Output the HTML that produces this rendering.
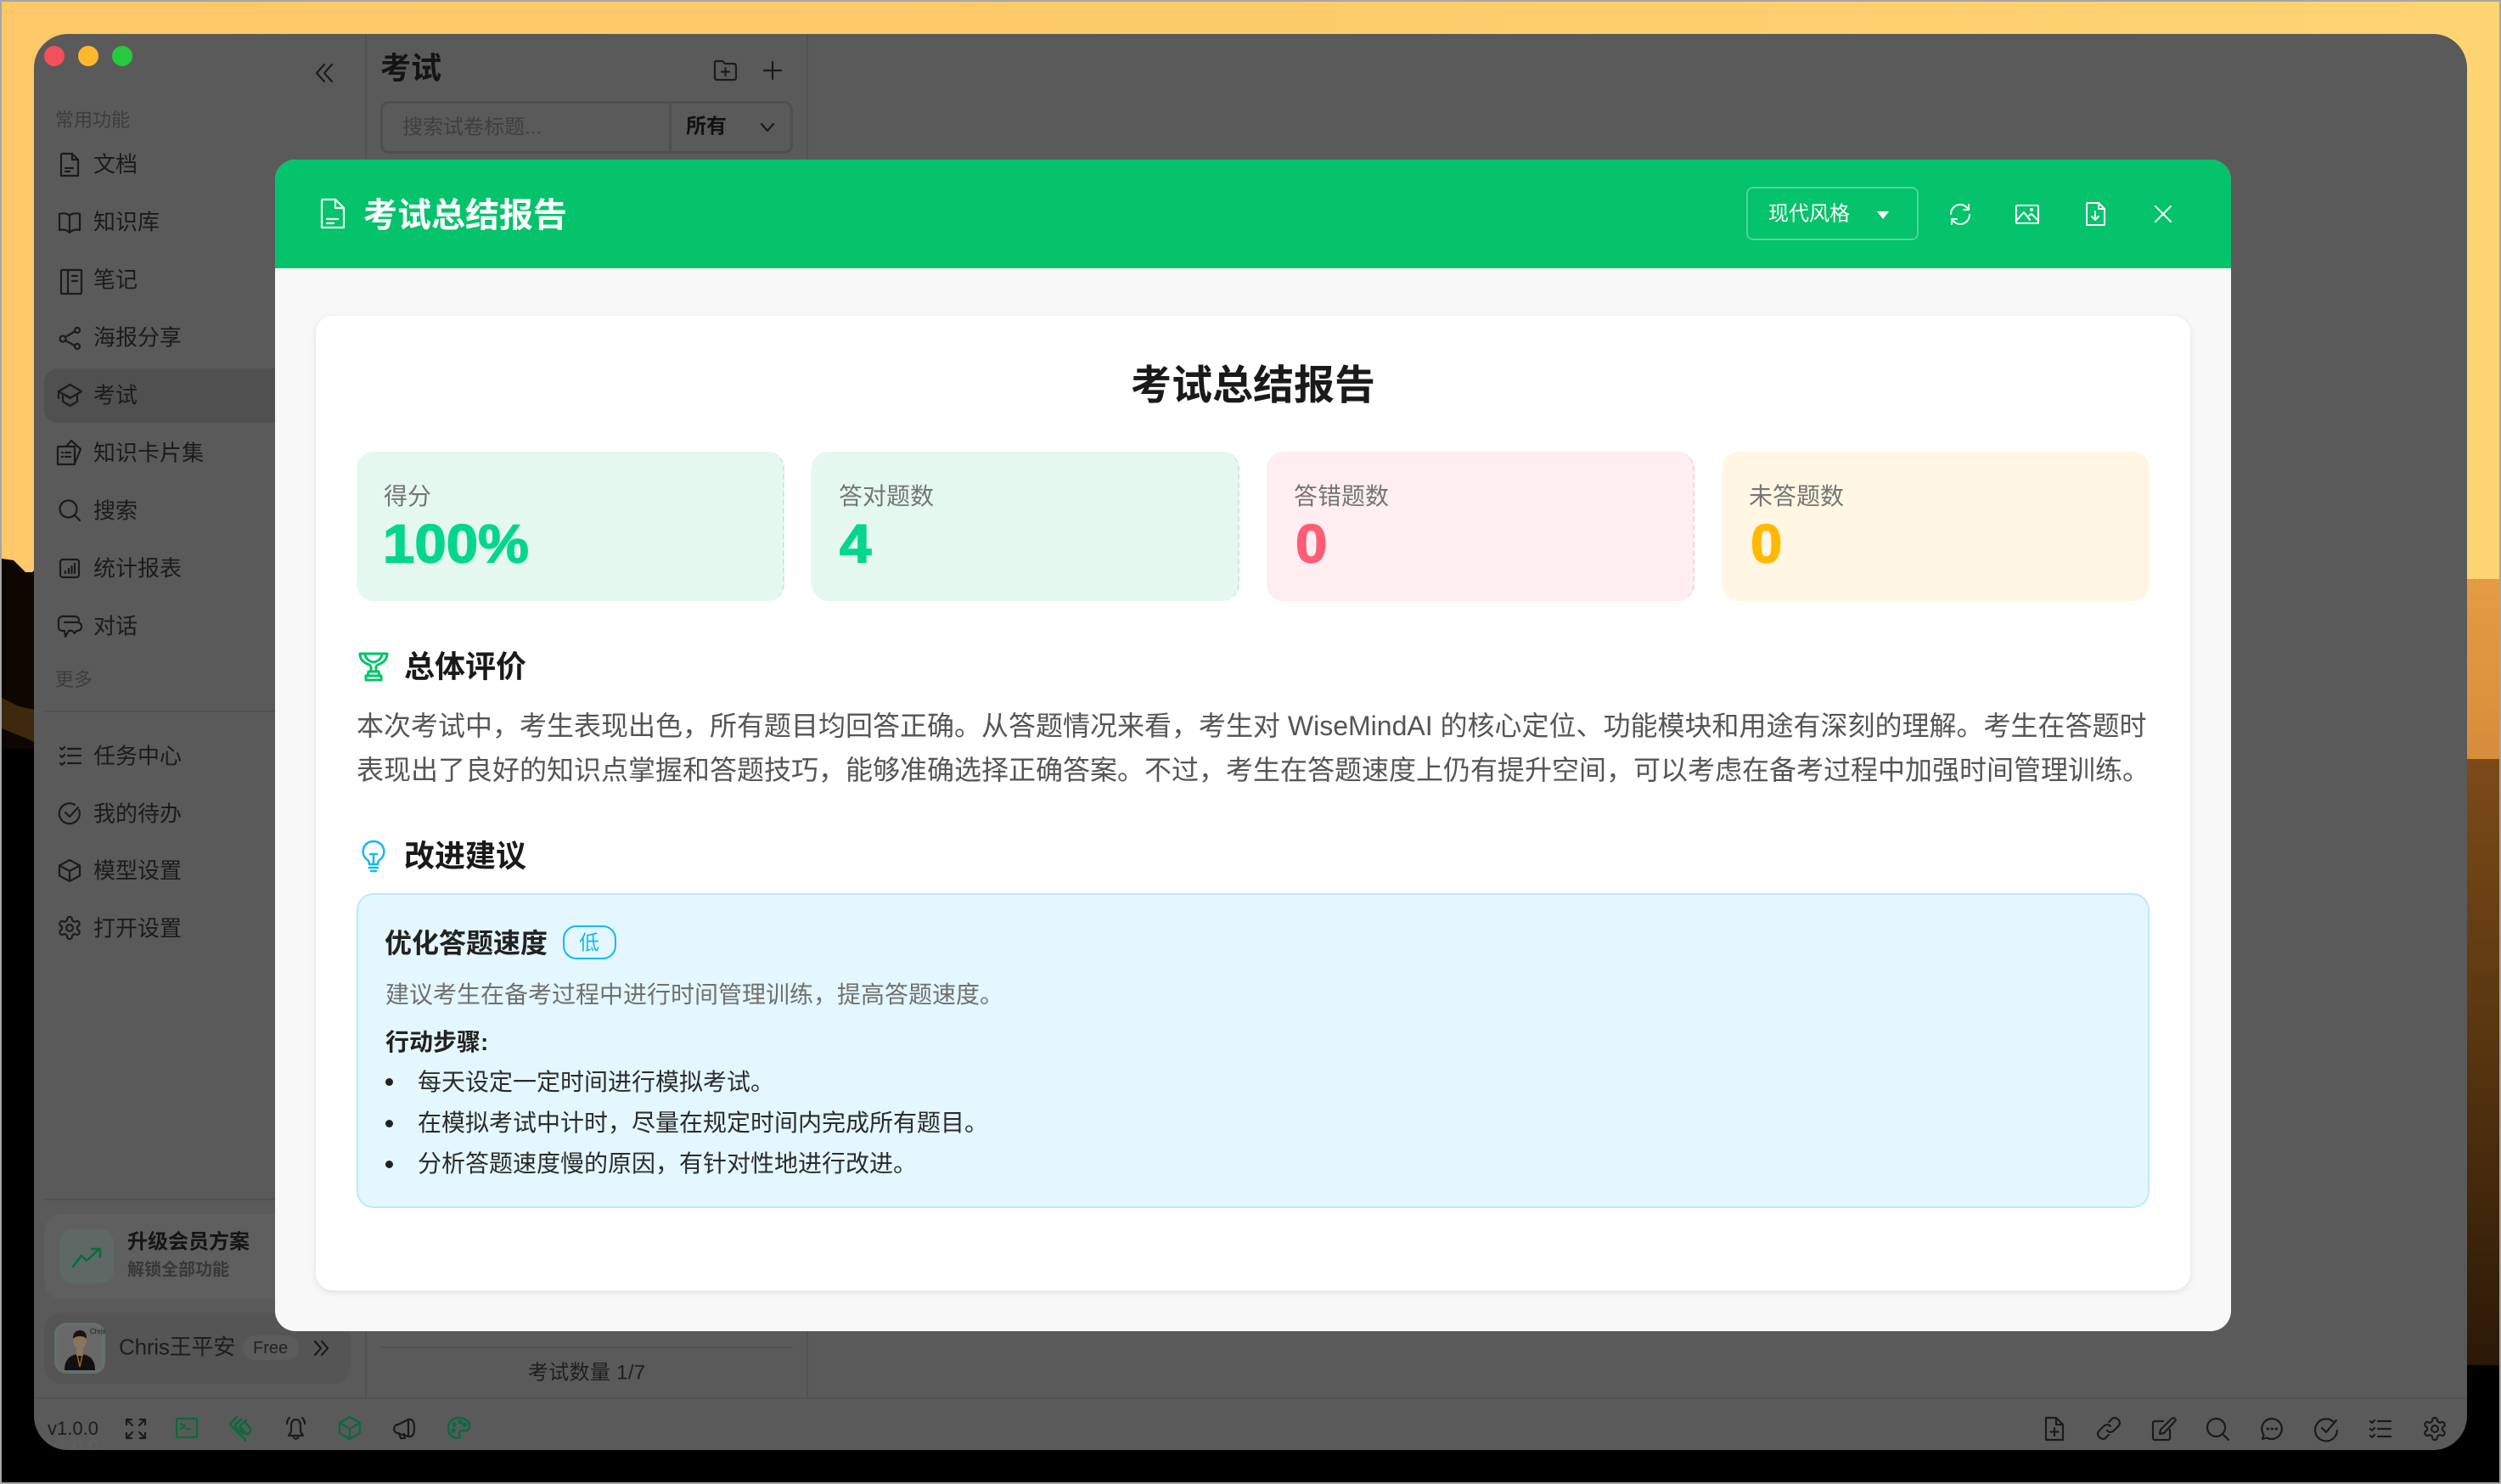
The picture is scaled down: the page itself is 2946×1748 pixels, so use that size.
<!DOCTYPE html>
<html lang="zh-CN">
<head>
<meta charset="utf-8">
<title>考试总结报告</title>
<style>
html,body{margin:0;padding:0;background:#000;}
body{position:relative;width:2946px;height:1748px;overflow:hidden;font-family:"Liberation Sans","Noto Sans CJK SC",sans-serif;}
#frame{position:absolute;left:0;top:0;width:2946px;height:1748px;background:#a6a6a6;}
#wall{position:absolute;left:2px;top:2px;}
#win{position:absolute;left:40px;top:40px;width:2866px;height:1668px;background:#5a5a5a;border-radius:40px;overflow:hidden;}
.a{position:absolute;}
.t{position:absolute;white-space:nowrap;line-height:1.2;transform:translateY(calc(-50% + 2px));}
svg.i{position:absolute;fill:none;stroke:#1b1b1b;stroke-width:2.200;stroke-linecap:round;stroke-linejoin:round;overflow:visible;}
.n{font-size:26px;color:#1b1b1b;left:110px;margin-top:-1px;}
.w{stroke:#fff!important;}
.g{stroke:#0a6a3e!important;}
.sec{font-size:36px;font-weight:700;color:#1a1a1a;}
.stat{position:absolute;top:532px;width:504px;height:176px;border-radius:20px;box-sizing:border-box;}
.lbl{font-size:28px;color:#757575;}
.val{font-size:64px;font-weight:700;font-family:"Liberation Sans",sans-serif;transform:translateY(-50%) scaleX(1.05);transform-origin:left center;-webkit-text-stroke:1.500px currentColor;}
.li{font-size:28px;color:#2b2b2b;left:492px;}
.dot{position:absolute;left:454px;width:9px;height:9px;border-radius:50%;background:#222;}
</style>
</head>
<body>
<div id="frame"></div>
<svg id="wall" width="2942" height="1744" viewBox="0 0 2942 1744">
  <defs>
    <linearGradient id="sky" x1="0" y1="0" x2="1" y2="0"><stop offset="0" stop-color="#ffc868"/><stop offset=".5" stop-color="#fdcb6a"/><stop offset="1" stop-color="#ffd472"/></linearGradient>
    <linearGradient id="br" x1="0" y1="0" x2="0" y2="1"><stop offset="0" stop-color="#7c4b18"/><stop offset=".5" stop-color="#55340f"/><stop offset="1" stop-color="#2a1806"/></linearGradient>
    <linearGradient id="or" x1="0" y1="0" x2="0" y2="1"><stop offset="0" stop-color="#e39c42"/><stop offset="1" stop-color="#d68d3c"/></linearGradient>
  </defs>
  <rect width="2942" height="1744" fill="url(#sky)"/>
  <rect x="2860" y="680" width="82" height="215" fill="url(#or)"/>
  <rect x="2860" y="892" width="82" height="718" fill="url(#br)"/>
  <rect x="2860" y="1606" width="82" height="138" fill="#000"/>
  <path d="M0 656l14 2 8 8 6 6 8 0 4-4 12 2 8-2V1744H0z" fill="#0e0600"/>
  <path d="M0 820l20 10 38 8v44L30 868 0 856z" fill="#3d2a0e"/>
  <rect y="880" width="70" height="864" fill="#000"/>
  <rect y="1700" width="2942" height="44" fill="#000"/>
</svg>

<div id="win"><div class="t" style="left:16px;top:1662px;font-size:22px;color:#5f5f5f">v1.0.0</div></div>

<!-- panel dividers -->
<div class="a" style="left:430px;top:40px;width:2px;height:1607px;background:#525252"></div>
<div class="a" style="left:950px;top:40px;width:2px;height:1607px;background:#525252"></div>
<div class="a" style="left:40px;top:1646px;width:2866px;height:2px;background:#535353"></div>

<!-- traffic lights -->
<div class="a" style="left:52px;top:54px;width:24px;height:24px;border-radius:50%;background:#f2505a"></div>
<div class="a" style="left:92px;top:54px;width:24px;height:24px;border-radius:50%;background:#ffb82e"></div>
<div class="a" style="left:132px;top:54px;width:24px;height:24px;border-radius:50%;background:#27c93f"></div>

<!-- collapse -->
<svg class="i" style="left:372px;top:75px" width="20" height="22" viewBox="0 0 20 22"><path d="M10 1L1 11l9 10M19 1L10 11l9 10"/></svg>

<!-- sidebar -->
<div class="t" style="left:65px;top:140px;font-size:22px;color:#3d3d3d">常用功能</div>
<div class="a" style="left:52px;top:434px;width:300px;height:64px;border-radius:16px;background:#505050"></div>

<svg class="i" style="left:71px;top:180px" width="22" height="28" viewBox="0 0 22 28"><path d="M2 1h12l7 7v19H1V2zM14 1v7h7M6 18h9M6 22h5"/></svg>
<div class="t n" style="top:193px">文档</div>
<svg class="i" style="left:68px;top:250px" width="28" height="25" viewBox="0 0 28 25"><path d="M14 4C11 1 6 1 2 2v19c4-1 8-1 12 3 4-4 8-4 12-3V2c-4-1-9-1-12 2zM14 4v20"/></svg>
<div class="t n" style="top:261px">知识库</div>
<svg class="i" style="left:71px;top:317px" width="26" height="30" viewBox="0 0 26 30"><rect x="1" y="1" width="24" height="28" rx="1"/><path d="M9 1v28M14 8h6M14 14h6"/></svg>
<div class="t n" style="top:329px">笔记</div>
<svg class="i" style="left:69px;top:385px" width="27" height="27" viewBox="0 0 27 27"><circle cx="22" cy="4" r="3"/><circle cx="5" cy="14" r="3.500"/><circle cx="22" cy="23" r="3"/><path d="M8 12l11-6.500M8 16l11 6"/></svg>
<div class="t n" style="top:397px">海报分享</div>
<svg class="i" style="left:68px;top:452px" width="29" height="27" viewBox="0 0 29 27"><path d="M14.500 1L28 9 14.500 17 1 9zM6 12v9l8.500 5 8.500-5v-9M6 12l8 4M1 9v8"/></svg>
<div class="t n" style="top:465px">考试</div>
<svg class="i" style="left:66px;top:518px" width="31" height="31" viewBox="0 0 31 31"><path d="M2 8h20v21H2zM12 8l6-7 11 10-7 17M7 15h1M11 15h6M7 20h1M11 20h6"/></svg>
<div class="t n" style="top:533px">知识卡片集</div>
<svg class="i" style="left:69px;top:588px" width="26" height="26" viewBox="0 0 26 26"><circle cx="11.500" cy="11.500" r="10"/><path d="M19 19l6 6"/></svg>
<div class="t n" style="top:601px">搜索</div>
<svg class="i" style="left:70px;top:658px" width="24" height="23" viewBox="0 0 24 23"><rect x="1" y="1" width="22" height="21" rx="3"/><path d="M7 17v-2M11 17v-5M14.500 17V9M18 17V6"/></svg>
<div class="t n" style="top:669px">统计报表</div>
<svg class="i" style="left:68px;top:725px" width="29" height="26" viewBox="0 0 29 26"><path d="M8 18H5c-2 0-4-2-4-4V6c0-3 2-5 5-5h14c3 0 5 2 5 5M8 8h15c3 0 5 2 5 5 0 3-2 5-5 5h-1l-2 3-3-3h-4l-4 7-1-7"/></svg>
<div class="t n" style="top:737px">对话</div>
<div class="t" style="left:65px;top:799px;font-size:22px;color:#3d3d3d">更多</div>
<div class="a" style="left:52px;top:837px;width:278px;height:2px;background:#525252"></div>
<svg class="i" style="left:69px;top:878px" width="27" height="24" viewBox="0 0 27 24"><path d="M2 3l2 2 3-3M2 12l2 2 3-3M2 21l2 2 3-3M11 4h15M11 12h15M11 21h15"/></svg>
<div class="t n" style="top:890px">任务中心</div>
<svg class="i" style="left:69px;top:945px" width="27" height="26" viewBox="0 0 27 26"><path d="M24 9a12 12 0 1 1-5-6M8 12l5 5 10-11"/></svg>
<div class="t n" style="top:958px">我的待办</div>
<svg class="i" style="left:69px;top:1012px" width="26" height="27" viewBox="0 0 26 27"><path d="M13 1l12 6.500v12L13 26 1 19.500v-12zM1 7.500L13 14l12-6.500M13 14v12"/></svg>
<div class="t n" style="top:1025px">模型设置</div>
<svg class="i" style="left:69px;top:1080px;stroke-width:1.700" width="26" height="26" viewBox="2 2 20 20"><path d="M12.220 2h-.44a2 2 0 0 0-2 2v.18a2 2 0 0 1-1 1.730l-.43.25a2 2 0 0 1-2 0l-.15-.08a2 2 0 0 0-2.730.73l-.22.38a2 2 0 0 0 .73 2.730l.15.1a2 2 0 0 1 1 1.720v.51a2 2 0 0 1-1 1.740l-.15.09a2 2 0 0 0-.73 2.730l.22.38a2 2 0 0 0 2.730.73l.15-.08a2 2 0 0 1 2 0l.43.25a2 2 0 0 1 1 1.730V20a2 2 0 0 0 2 2h.44a2 2 0 0 0 2-2v-.18a2 2 0 0 1 1-1.730l.43-.25a2 2 0 0 1 2 0l.15.08a2 2 0 0 0 2.730-.73l.22-.39a2 2 0 0 0-.73-2.730l-.15-.08a2 2 0 0 1-1-1.740v-.5a2 2 0 0 1 1-1.740l.15-.09a2 2 0 0 0 .73-2.730l-.22-.38a2 2 0 0 0-2.730-.73l-.15.08a2 2 0 0 1-2 0l-.43-.25a2 2 0 0 1-1-1.730V4a2 2 0 0 0-2-2z"/><circle cx="12" cy="12" r="3"/></svg>
<div class="t n" style="top:1093px">打开设置</div>

<div class="a" style="left:52px;top:1412px;width:300px;height:2px;background:#525252"></div>
<div class="a" style="left:52px;top:1430px;width:300px;height:100px;border-radius:20px;background:#5f5f5f"></div>
<div class="a" style="left:70px;top:1448px;width:64px;height:64px;border-radius:16px;background:#5e6966"></div>
<svg class="i g" style="left:85px;top:1469px;stroke-width:2.500" width="34" height="24" viewBox="0 0 34 24"><path d="M1 23l10-13 6 6L32 2M23 2h10v10"/></svg>
<div class="t" style="left:150px;top:1462px;font-size:24px;font-weight:700;color:#151515">升级会员方案</div>
<div class="t" style="left:150px;top:1494px;font-size:20px;font-weight:700;color:#383838">解锁全部功能</div>

<div class="a" style="left:52px;top:1546px;width:361px;height:84px;border-radius:20px;background:#555"></div>
<svg class="a" style="left:64px;top:1558px" width="60" height="60" viewBox="0 0 60 60"><rect width="60" height="60" rx="14" fill="#64706d"/><rect x="4" y="4" width="52" height="52" rx="10" fill="#686868"/><path d="M12 56c0-14 8-19 18-19s18 5 18 19z" fill="#111"/><rect x="26" y="28" width="8" height="11" fill="#8a7560"/><ellipse cx="30" cy="21" rx="8" ry="10" fill="#8a7560"/><path d="M22 19c0-7 3-10 8-10s8 3 8 10c-3-4-13-4-16 0z" fill="#151515"/><path d="M27 38l3 14 3-14" fill="none" stroke="#a06a20" stroke-width="1.500"/><text x="42" y="13" font-size="8" fill="#222" font-family="Liberation Sans, sans-serif">Chris</text></svg>
<div class="t" style="left:140px;top:1585px;font-size:26px;color:#1d1d1d;letter-spacing:-.2px">Chris王平安</div>
<div class="a" style="left:286px;top:1573px;width:66px;height:29px;border-radius:15px;background:#5c5c5c"></div>
<div class="t" style="left:298px;top:1586px;font-size:20px;color:#222">Free</div>
<svg class="i" style="left:370px;top:1579px" width="17" height="18" viewBox="0 0 17 18"><path d="M1 1l7 8-7 8M9 1l7 8-7 8"/></svg>

<!-- middle panel -->
<div class="t" style="left:448px;top:78px;font-size:36px;font-weight:700;color:#141414">考试</div>
<svg class="i" style="left:841px;top:71px" width="27" height="24" viewBox="0 0 27 24"><path d="M2 1h8l3 3h10c2 0 3 1 3 3v14c0 1-1 2-2 2H3c-1 0-2-1-2-2V2zM13.500 9v9M9 13.500h9"/></svg>
<svg class="i" style="left:899px;top:72px" width="22" height="22" viewBox="0 0 22 22"><path d="M11 1v20M1 11h20"/></svg>
<div class="a" style="left:448px;top:119px;width:486px;height:62px;border-radius:10px;border:3px solid #4f4f4f;box-sizing:border-box"></div>
<div class="a" style="left:788px;top:119px;width:3px;height:62px;background:#4f4f4f"></div>
<div class="t" style="left:474px;top:149px;font-size:24px;color:#3f3f3f">搜索试卷标题...</div>
<div class="t" style="left:808px;top:148px;font-size:24px;font-weight:700;color:#121212">所有</div>
<svg class="i" style="left:896px;top:145px" width="16" height="10" viewBox="0 0 16 10"><path d="M1 1l7 8 7-8"/></svg>
<div class="a" style="left:448px;top:1586px;width:486px;height:2px;background:#525252"></div>
<div class="t" style="left:622px;top:1616px;font-size:24px;color:#1f1f1f;letter-spacing:.3px">考试数量 1/7</div>

<!-- bottom bar left -->
<div class="t" style="left:56px;top:1681px;font-size:22px;color:#1d1d1d">v1.0.0</div>
<svg class="i" style="left:148px;top:1671px" width="24" height="24" viewBox="0 0 24 24"><path d="M1 7V1h6M17 1h6v6M1 17v6h6M23 17v6h-6M2 2l6 6M22 2l-6 6M2 22l6-6M22 22l-6-6"/></svg>
<svg class="i g" style="left:207px;top:1670px" width="26" height="24" viewBox="0 0 26 24"><rect x="1" y="1" width="24" height="22" rx="1"/><path d="M6 7l5 3-5 3M12 13h5"/></svg>
<svg class="i g" style="left:271px;top:1668px;stroke-width:2.500" width="26" height="30" viewBox="0 0 26 30"><path d="M8 1L1 8c-1 1-1 2 0 3l11 11c2 2 4 3 5 4l1 3M13 4L6 10c0 1 0 2 1 3l9 8M19 5l-7 6c-1 1 0 2 1 3l6 7c2 1 5-2 5-5 0-2-2-4-3-5l-3-3"/></svg>
<svg class="i" style="left:336px;top:1669px" width="25" height="28" viewBox="0 0 25 28"><path d="M12.500 3C9 3 7 6 7 10v6c0 3-2 4-3 6h17c-1-2-3-3-3-6v-6c0-4-2-7-5.500-7zM9.500 22c0 5 6 5 6 0M2 8c0-3 1-5 3-7M23 8c0-3-1-5-3-7"/></svg>
<svg class="i g" style="left:399px;top:1668px" width="26" height="28" viewBox="0 0 26 28"><path d="M13 1l12 7v12l-12 7-12-7V8zM1 8l12 7 12-7M13 15v12"/></svg>
<svg class="i" style="left:463px;top:1670px" width="26" height="25" viewBox="0 0 26 25"><path d="M18 2L6 8H5c-5 1-5 9 0 10l13 4zM18 2c5-1 7 3 7 10 0 7-2 11-7 10M7 18l2 6h5l-1-5"/></svg>
<svg class="i g" style="left:527px;top:1669px;stroke-width:2.500" width="27" height="26" viewBox="0 0 27 26"><path d="M14 1C6 1 1 6 1 13s5 12 11 12c3 0 3-2 2-4-1-3 1-5 4-5h4c3 0 4-3 4-6 0-5-6-9-12-9z"/><circle cx="8" cy="9" r="1.500"/><circle cx="15" cy="6" r="1.500"/><circle cx="7" cy="16" r="1.500"/><circle cx="20" cy="9" r="1.500"/></svg>

<!-- bottom bar right -->
<svg class="i" style="left:2409px;top:1669px" width="22" height="28" viewBox="0 0 22 28"><path d="M1 1h12l8 8v18H1zM13 1v8h8M11 13v9M6.500 17.500h9"/></svg>
<svg class="i" style="left:2470px;top:1669px" width="28" height="28" viewBox="0 0 28 28"><path d="M12 16c3 3 6 2 8 0l5-5c3-3 2-6 0-8s-6-3-8 0l-3 3M16 11c-3-3-6-2-8 0l-5 5c-3 3-2 6 0 8s6 3 8 0l3-3"/></svg>
<svg class="i" style="left:2535px;top:1669px" width="28" height="28" viewBox="0 0 28 28"><path d="M13 5H3c-1 0-2 1-2 2v18c0 1 1 2 2 2h16c1 0 2-1 2-2V15M10 15L23 2c1-1 3-1 4 0s1 2 0 3L14 19l-5 1z"/></svg>
<svg class="i" style="left:2599px;top:1670px" width="27" height="27" viewBox="0 0 27 27"><circle cx="11.500" cy="11.500" r="10.500"/><path d="M19 19l7 7"/></svg>
<svg class="i" style="left:2663px;top:1670px" width="26" height="26" viewBox="0 0 26 26"><path d="M13 1a12 12 0 1 1-6 22.500L2 25l1.500-5A12 12 0 0 1 13 1z"/><path d="M8 13h.5M13 13h.5M18 13h.5" stroke-width="3"/></svg>
<svg class="i" style="left:2727px;top:1669px" width="27" height="27" viewBox="0 0 27 27"><path d="M22 6A13 13 0 1 0 26 16M8 13l5 5 12-14"/></svg>
<svg class="i" style="left:2791px;top:1671px" width="26" height="23" viewBox="0 0 26 23"><path d="M1 3l2 2 3-3M1 12l2 2 3-3M1 20l2 2 3-3M10 3h15M10 12h15M10 21h15"/></svg>
<svg class="i" style="left:2855px;top:1670px;stroke-width:1.700" width="26" height="26" viewBox="2 2 20 20"><path d="M12.220 2h-.44a2 2 0 0 0-2 2v.18a2 2 0 0 1-1 1.730l-.43.25a2 2 0 0 1-2 0l-.15-.08a2 2 0 0 0-2.730.73l-.22.38a2 2 0 0 0 .73 2.730l.15.1a2 2 0 0 1 1 1.720v.51a2 2 0 0 1-1 1.740l-.15.09a2 2 0 0 0-.73 2.730l.22.38a2 2 0 0 0 2.730.73l.15-.08a2 2 0 0 1 2 0l.43.25a2 2 0 0 1 1 1.730V20a2 2 0 0 0 2 2h.44a2 2 0 0 0 2-2v-.18a2 2 0 0 1 1-1.730l.43-.25a2 2 0 0 1 2 0l.15.08a2 2 0 0 0 2.730-.73l.22-.39a2 2 0 0 0-.73-2.730l-.15-.08a2 2 0 0 1-1-1.740v-.5a2 2 0 0 1 1-1.740l.15-.09a2 2 0 0 0 .73-2.730l-.22-.38a2 2 0 0 0-2.730-.73l-.15.08a2 2 0 0 1-2 0l-.43-.25a2 2 0 0 1-1-1.730V4a2 2 0 0 0-2-2z"/><circle cx="12" cy="12" r="3"/></svg>

<!-- modal -->
<div class="a" style="left:324px;top:188px;width:2304px;height:1380px;border-radius:24px;background:#f8f8f8"></div>
<div class="a" style="left:324px;top:188px;width:2304px;height:128px;border-radius:24px 24px 0 0;background:#04c36a"></div>
<svg class="i w" style="left:378px;top:234px" width="28" height="35" viewBox="0 0 28 35"><path d="M2 1h15l10 10v23H1V2zM17 1v10h10M7 24h13M7 29h8"/></svg>
<div class="t" style="left:428px;top:252px;font-size:40px;font-weight:700;color:#fff">考试总结报告</div>
<div class="a" style="left:2057px;top:220px;width:203px;height:63px;border:2px solid rgba(255,255,255,.3);border-radius:8px;box-sizing:border-box"></div>
<div class="t" style="left:2083px;top:251px;font-size:24px;color:#fff">现代风格</div>
<svg class="a" style="left:2211px;top:249px" width="14" height="9" viewBox="0 0 14 9"><path d="M0 0h14L7 9z" fill="#fff"/></svg>
<svg class="i w" style="left:2296px;top:240px;stroke-width:2" width="26" height="25" viewBox="0 0 26 25"><path d="M2 12C2 6 7 1 13 1c4 0 7 2 9 5M24 13c0 6-5 11-11 11-4 0-7-2-9-5M23 1v6h-6M3 24v-6h6"/></svg>
<svg class="i w" style="left:2374px;top:241px;stroke-width:2" width="28" height="23" viewBox="0 0 28 23"><rect x="1" y="1" width="26" height="21" rx="1"/><path d="M1 19l9-10 7 9M16 13l3-2 8 8"/><circle cx="19" cy="6" r="1"/></svg>
<svg class="i w" style="left:2457px;top:238px;stroke-width:2" width="23" height="28" viewBox="0 0 23 28"><path d="M2 1h13l7 7v19H1V2zM15 1v7h7M11 11v10M7 17l4 4 4-4"/></svg>
<svg class="i w" style="left:2538px;top:243px;stroke-width:2" width="20" height="18" viewBox="0 0 20 18"><path d="M1 0l18 18M19 0L1 18"/></svg>

<!-- report card -->
<div class="a" style="left:372px;top:372px;width:2208px;height:1148px;border-radius:20px;background:#fff;box-shadow:0 2px 8px rgba(0,0,0,.1)"></div>
<div class="t" style="left:1332px;top:453px;font-size:48px;font-weight:700;color:#1a1a1a">考试总结报告</div>

<div class="stat" style="left:420px;background:#e4f8f0;border-right:2px dashed #cfe6df"></div>
<div class="stat" style="left:956px;background:#e4f8f0;border-right:2px dashed #cfe6df"></div>
<div class="stat" style="left:1492px;background:#ffeef1;border-right:2px dashed #ecd7dc"></div>
<div class="stat" style="left:2028px;background:#fff6e3"></div>
<div class="t lbl" style="left:452px;top:583px">得分</div>
<div class="t lbl" style="left:988px;top:583px">答对题数</div>
<div class="t lbl" style="left:1524px;top:583px">答错题数</div>
<div class="t lbl" style="left:2060px;top:583px">未答题数</div>
<div class="t val" style="left:451px;top:641px;color:#04d68c">100%</div>
<div class="t val" style="left:989px;top:641px;color:#04d68c">4</div>
<div class="t val" style="left:1526px;top:641px;color:#ff5c77">0</div>
<div class="t val" style="left:2062px;top:641px;color:#ffb900">0</div>

<svg class="i" style="left:422px;top:767px;stroke:#04c36a;stroke-width:3" width="36" height="36" viewBox="0 0 36 36"><path d="M2 3h32c0 7-5 11-11 13l-2 2v6h-6v-6l-2-2C7 14 2 10 2 3zM8 3c0 5 4 9 10 10 6-1 10-5 10-10M12 24h12l1 5H11zM9 29h18v5H9z"/></svg>
<div class="t sec" style="left:476px;top:783px">总体评价</div>
<div class="t" style="left:420px;top:853px;font-size:32px;color:#555">本次考试中，考生表现出色，所有题目均回答正确。从答题情况来看，考生对 WiseMindAI 的核心定位、功能模块和用途有深刻的理解。考生在答题时</div>
<div class="t" style="left:420px;top:905px;font-size:32px;color:#555">表现出了良好的知识点掌握和答题技巧，能够准确选择正确答案。不过，考生在答题速度上仍有提升空间，可以考虑在备考过程中加强时间管理训练。</div>

<svg class="i" style="left:426px;top:989px;stroke:#12b8f8;stroke-width:2.500" width="28" height="38" viewBox="0 0 28 38"><path d="M14 2A12 12 0 0 0 7 24c1 1 2 2 2 5h10c0-3 1-4 2-5A12 12 0 0 0 14 2zM9 33h10M11 37h6M10 17h8M14 17v12"/></svg>
<div class="t sec" style="left:476px;top:1006px">改进建议</div>

<div class="a" style="left:420px;top:1052px;width:2112px;height:371px;box-sizing:border-box;border:2px solid #b9e9fb;border-radius:20px;background:#e4f7fe"></div>
<div class="t" style="left:453px;top:1109px;font-size:32px;font-weight:700;color:#222">优化答题速度</div>
<div class="a" style="left:663px;top:1090px;width:63px;height:40px;box-sizing:border-box;border:2px solid #12b8f8;border-radius:16px"></div>
<div class="t" style="left:682px;top:1110px;font-size:24px;color:#12b8f8">低</div>
<div class="t" style="left:454px;top:1170px;font-size:28px;color:#707070">建议考生在备考过程中进行时间管理训练，提高答题速度。</div>
<div class="t" style="left:454px;top:1226px;font-size:28px;font-weight:700;color:#222">行动步骤:</div>
<div class="dot" style="top:1270px"></div>
<div class="dot" style="top:1319px"></div>
<div class="dot" style="top:1367px"></div>
<div class="t li" style="top:1273px">每天设定一定时间进行模拟考试。</div>
<div class="t li" style="top:1321px">在模拟考试中计时，尽量在规定时间内完成所有题目。</div>
<div class="t li" style="top:1369px">分析答题速度慢的原因，有针对性地进行改进。</div>
</body>
</html>
